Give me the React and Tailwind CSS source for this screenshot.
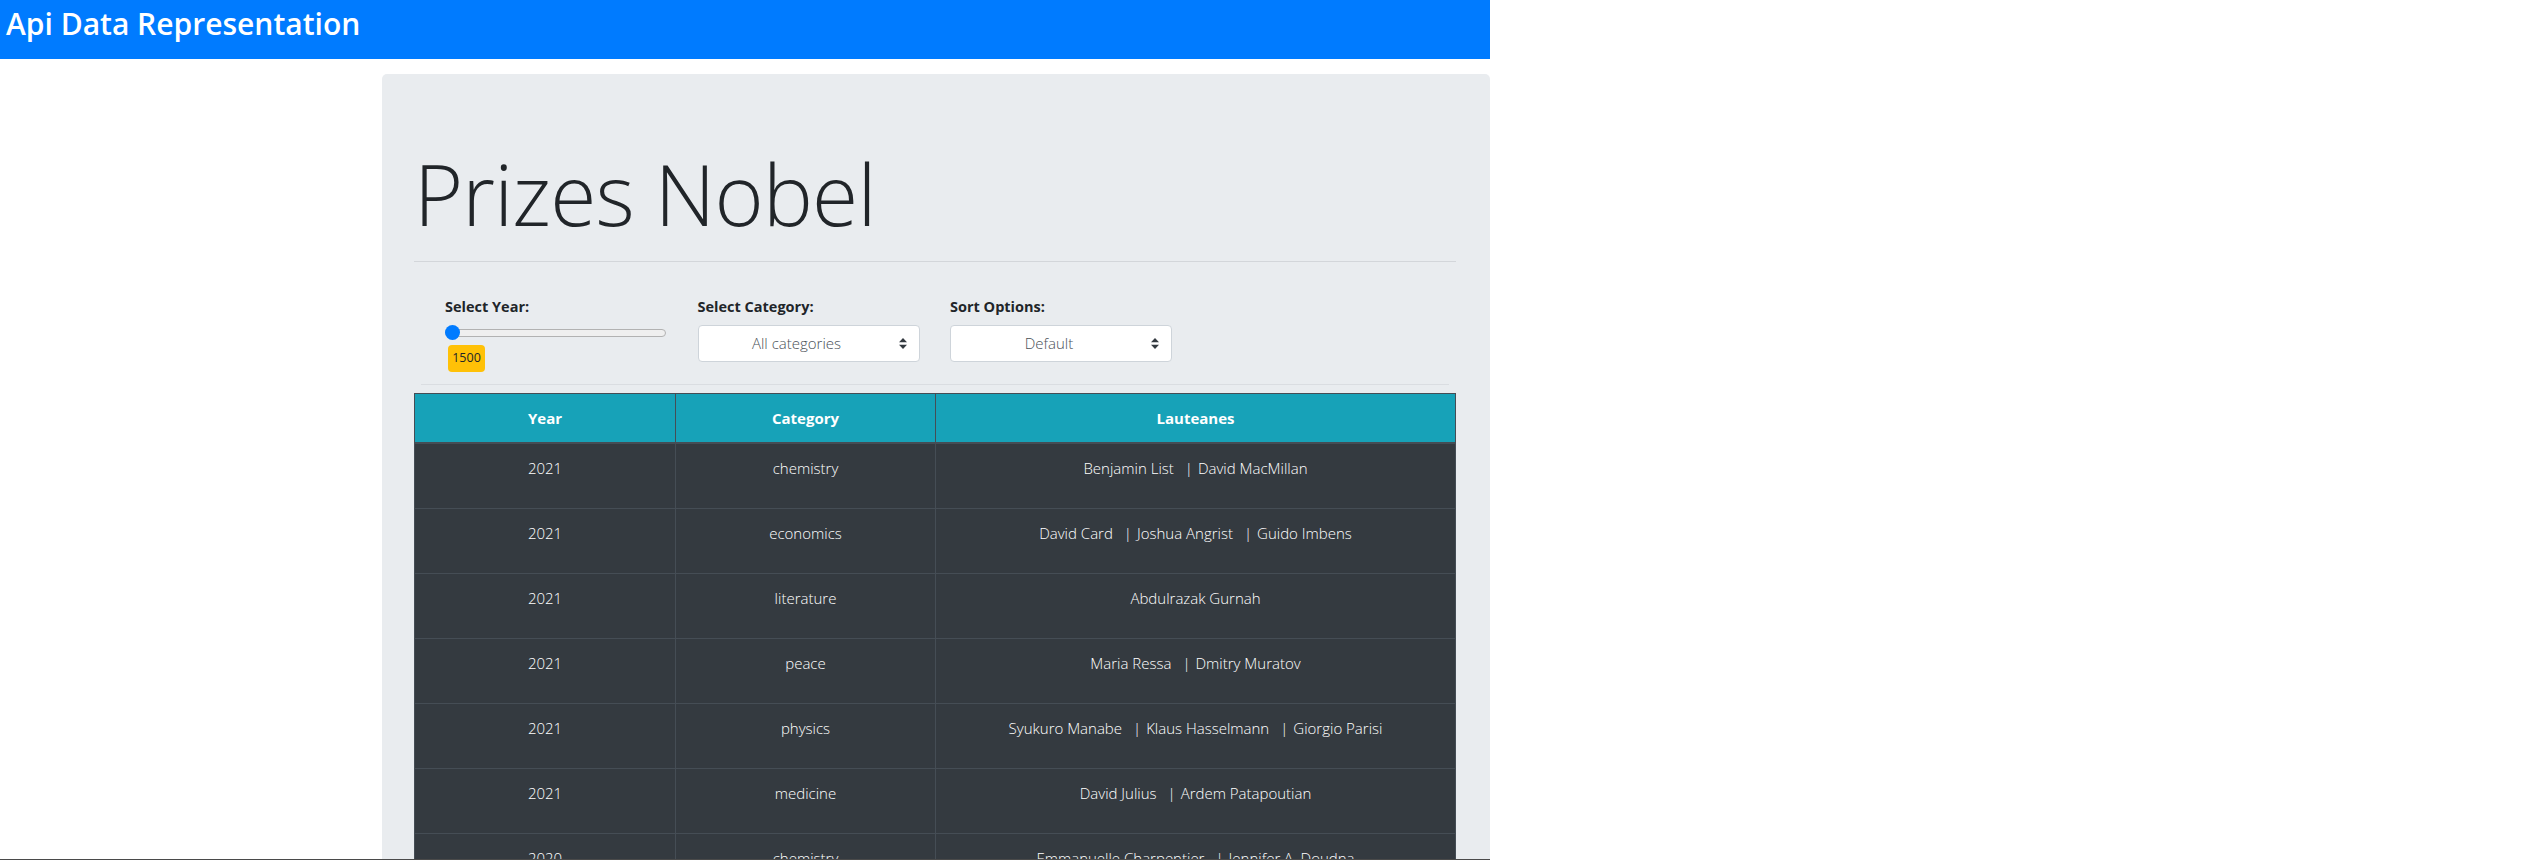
import React from 'react';

const prizes = [
  { year: 2021, category: 'chemistry', laureates: ['Benjamin List', 'David MacMillan'] },
  { year: 2021, category: 'economics', laureates: ['David Card', 'Joshua Angrist', 'Guido Imbens'] },
  { year: 2021, category: 'literature', laureates: ['Abdulrazak Gurnah'] },
  { year: 2021, category: 'peace', laureates: ['Maria Ressa', 'Dmitry Muratov'] },
  { year: 2021, category: 'physics', laureates: ['Syukuro Manabe', 'Klaus Hasselmann', 'Giorgio Parisi'] },
  { year: 2021, category: 'medicine', laureates: ['David Julius', 'Ardem Patapoutian'] },
  { year: 2020, category: 'chemistry', laureates: ['Emmanuelle Charpentier', 'Jennifer A. Doudna'] },
  { year: 2020, category: 'economics', laureates: ['Paul Milgrom', 'Robert B. Wilson'] },
  { year: 2020, category: 'literature', laureates: ['Louise Glück'] },
];

const SelectArrows = () => (
  <svg width="8" height="11" viewBox="0 0 8 11" className="shrink-0">
    <path d="M4 0 L8 4.2 L0 4.2 Z" fill="#343a40" />
    <path d="M0 6.8 L8 6.8 L4 11 Z" fill="#343a40" />
  </svg>
);

const FakeSelect = ({ value }) => (
  <div className="h-[37px] w-[222px] bg-white border border-[#ced4da] rounded-[4px] flex items-center pl-3 pr-[12px]">
    <span className="flex-1 text-center text-[15px] font-light text-[#495057] pr-[16px]">{value}</span>
    <SelectArrows />
  </div>
);

const Controls = () => (
  <div className="flex gap-[30.5px] pl-[31px] pt-[34px]">
    <div className="w-[222px]">
      <div className="text-[14.5px] font-bold leading-[21px] text-[#212529]">Select Year:</div>
      <div className="relative mt-[8px] h-[15px] w-[221px]">
        <div className="absolute left-0 right-0 top-[4px] h-[8px] rounded-full border border-[#b2b2b2] bg-[#efefef]" />
        <div className="absolute left-0 top-0 h-[15px] w-[15px] rounded-full bg-[#007bff]" />
      </div>
      <div className="mt-[5px] ml-[3px] h-[27px] w-[37px] rounded-[4px] bg-[#ffc107] flex items-center justify-center text-[12.5px] text-[#212529]">
        1500
      </div>
    </div>
    <div className="w-[222px]">
      <div className="text-[14.5px] font-bold leading-[21px] text-[#212529]">Select Category:</div>
      <div className="mt-[8px]">
        <FakeSelect value="All categories" />
      </div>
    </div>
    <div className="w-[222px]">
      <div className="text-[14.5px] font-bold leading-[21px] text-[#212529]">Sort Options:</div>
      <div className="mt-[8px]">
        <FakeSelect value="Default" />
      </div>
    </div>
  </div>
);

const Laureates = ({ names }) => (
  <span>
    {names.map((n, i) => (
      <span key={n}>
        {i > 0 && <span className="ml-[11px] mr-[5px]">|</span>}
        {n}
      </span>
    ))}
  </span>
);

const PrizeTable = () => (
  <div className="mt-[8px] border border-[#454d55] bg-[#343a40]">
    <div className="grid grid-cols-[1fr_1fr_2fr] bg-[#17a2b8] border-b-2 border-[#454d55] text-white text-[15px] font-bold">
      <div className="h-[48px] flex items-center justify-center">Year</div>
      <div className="h-[48px] flex items-center justify-center border-l border-[#454d55]">Category</div>
      <div className="h-[48px] flex items-center justify-center border-l border-[#454d55]">Lauteanes</div>
    </div>
    {prizes.map((p, i) => (
      <div
        key={p.year + p.category}
        className={'grid grid-cols-[1fr_1fr_2fr] text-white text-[15px] font-light leading-[24px] ' + (i > 0 ? 'border-t border-[#454d55]' : '')}
      >
        <div className="h-[64px] pt-3 text-center">{p.year}</div>
        <div className="h-[64px] pt-3 text-center border-l border-[#454d55]">{p.category}</div>
        <div className="h-[64px] pt-3 text-center border-l border-[#454d55]">
          <Laureates names={p.laureates} />
        </div>
      </div>
    ))}
  </div>
);

export default function App() {
  return (
    <div className="min-h-screen bg-white font-['Open_Sans',sans-serif]">
      <div className="w-[1490px]">
        <nav className="h-[59px] bg-[#007bff] pl-[6px] pt-[6px]">
          <span className="text-[30px] font-semibold leading-[36px] text-white">Api Data Representation</span>
        </nav>

        <div className="flex mt-[15px]">
          <div className="w-[382px] shrink-0" />
          <div className="flex-1 bg-[#e9ecef] rounded-[5px] pl-8 pr-[34px] pt-[70px] pb-16 mb-8">
            <h1 className="text-[84px] font-light leading-[1.2] text-[#212529] tracking-[-0.01em]">Prizes Nobel</h1>
            <div className="mt-[16px] border-t border-[#d3d6da]" />
            <Controls />
            <div className="mt-[12px] mx-[7px] border-t border-[#dadde1]" />
            <PrizeTable />
          </div>
        </div>
      </div>
      <div className="fixed bottom-0 left-0 h-px w-[1490px] bg-[#4a4a4a]" />
    </div>
  );
}
